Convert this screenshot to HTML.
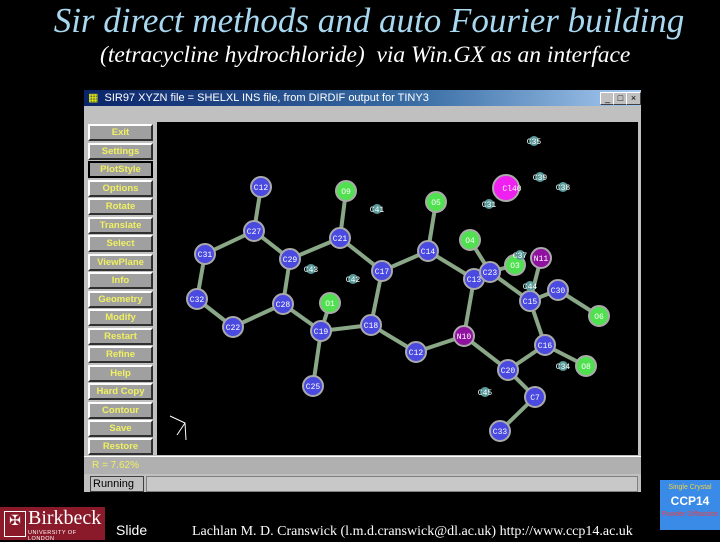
<!DOCTYPE html>
<html><head><meta charset="utf-8"><style>
body{margin:0;width:720px;height:540px;background:#000;position:relative;overflow:hidden;font-family:"Liberation Sans",sans-serif}
.t1{position:absolute;left:0;width:738px;text-align:center;top:1px;color:#a8d8f0;font-family:"Liberation Serif",serif;font-style:italic;font-size:35px;white-space:nowrap}
.t2{position:absolute;left:100px;top:42px;color:#fff;font-family:"Liberation Serif",serif;font-style:italic;font-size:23.5px;white-space:nowrap}
.win{position:absolute;left:84px;top:90px;width:557px;height:402px;background:#c0c0c0}
.tb{position:absolute;left:0;top:0;width:557px;height:16px;background:linear-gradient(90deg,#0a246a,#3a6ea5 60%,#a6caf0);color:#fff;font-size:11px;line-height:16px}
.btn{position:absolute;left:4px;width:65px;height:17px;background:#a0a0a0;border:2px solid #fff;border-right-color:#303030;border-bottom-color:#303030;color:#f0f060;font-size:9.5px;font-weight:bold;text-align:center;line-height:13px;box-sizing:border-box}
.plot{position:absolute;left:73px;top:32px;width:481px;height:333px;background:#000}
.wb{position:absolute;top:3px;width:13px;height:11px;background:#c0c0c0;border:1px solid #fff;border-right-color:#404040;border-bottom-color:#404040;font-size:9px;line-height:10px;text-align:center;color:#000}
</style></head><body>
<div class="t1">Sir direct methods and auto Fourier building</div>
<div class="t2">(tetracycline hydrochloride)&nbsp; via Win.GX as an interface</div>
<div class="win">
<div class="tb"><span style="color:#ff0;padding-left:4px">▦</span>&nbsp; SIR97 XYZN file = SHELXL INS file, from DIRDIF output for TINY3
<div class="wb" style="left:516px;top:2px">_</div><div class="wb" style="left:529px;top:2px">□</div><div class="wb" style="left:542px;top:2px">×</div></div>
<div class="btn" style="top:34px">Exit</div>
<div class="btn" style="top:53px">Settings</div>
<div class="btn" style="top:71px;border-color:#000">PlotStyle</div>
<div class="btn" style="top:90px">Options</div>
<div class="btn" style="top:108px">Rotate</div>
<div class="btn" style="top:127px">Translate</div>
<div class="btn" style="top:145px">Select</div>
<div class="btn" style="top:164px">ViewPlane</div>
<div class="btn" style="top:182px">Info</div>
<div class="btn" style="top:201px">Geometry</div>
<div class="btn" style="top:219px">Modify</div>
<div class="btn" style="top:238px">Restart</div>
<div class="btn" style="top:256px">Refine</div>
<div class="btn" style="top:275px">Help</div>
<div class="btn" style="top:293px">Hard Copy</div>
<div class="btn" style="top:312px">Contour</div>
<div class="btn" style="top:330px">Save</div>
<div class="btn" style="top:348px">Restore</div>
<div class="plot"></div>
<div style="position:absolute;left:0;top:366px;width:557px;height:18px;background:#b0b0b0;border-top:1px solid #fff;color:#f0f060;font-size:10px;line-height:18px;padding-left:8px;box-sizing:border-box">R = 7.62%</div>
<div style="position:absolute;left:6px;top:386px;width:50px;height:14px;border:1px solid #404040;font-size:11px;line-height:14px;color:#000;padding-left:2px">Running</div>
<div style="position:absolute;left:62px;top:386px;width:490px;height:14px;border:1px solid #808080;background:#c8c8c8"></div>
</div>
<svg style="position:absolute;left:0;top:0" width="720" height="540">
<g stroke="#8aa888" stroke-width="4">
<line x1="261" y1="187" x2="254" y2="231"/><line x1="254" y1="231" x2="205" y2="254"/><line x1="254" y1="231" x2="290" y2="259"/>
<line x1="205" y1="254" x2="197" y2="299"/><line x1="290" y1="259" x2="340" y2="238"/><line x1="340" y1="238" x2="346" y2="191"/>
<line x1="340" y1="238" x2="382" y2="271"/><line x1="290" y1="259" x2="283" y2="304"/><line x1="197" y1="299" x2="233" y2="327"/>
<line x1="233" y1="327" x2="283" y2="304"/><line x1="283" y1="304" x2="321" y2="331"/><line x1="321" y1="331" x2="330" y2="303"/>
<line x1="321" y1="331" x2="313" y2="386"/><line x1="321" y1="331" x2="371" y2="325"/><line x1="371" y1="325" x2="382" y2="271"/>
<line x1="382" y1="271" x2="428" y2="251"/><line x1="428" y1="251" x2="436" y2="202"/><line x1="428" y1="251" x2="474" y2="279"/>
<line x1="474" y1="279" x2="490" y2="272"/><line x1="490" y1="272" x2="470" y2="240"/><line x1="490" y1="272" x2="515" y2="265"/>
<line x1="490" y1="272" x2="530" y2="301"/><line x1="530" y1="301" x2="558" y2="290"/><line x1="530" y1="301" x2="545" y2="345"/>
<line x1="530" y1="301" x2="541" y2="258"/><line x1="558" y1="290" x2="599" y2="316"/><line x1="371" y1="325" x2="416" y2="352"/>
<line x1="416" y1="352" x2="464" y2="336"/><line x1="464" y1="336" x2="508" y2="370"/><line x1="508" y1="370" x2="545" y2="345"/>
<line x1="545" y1="345" x2="586" y2="366"/><line x1="508" y1="370" x2="535" y2="397"/><line x1="535" y1="397" x2="500" y2="431"/>
<line x1="474" y1="279" x2="464" y2="336"/>
</g>
<g font-family="Liberation Mono,monospace" font-size="8" fill="#fff" text-anchor="middle" stroke-width="2" stroke="#aaa">
<g fill="#4a4ae0">
<circle cx="261" cy="187" r="10"/><circle cx="254" cy="231" r="10"/><circle cx="205" cy="254" r="10"/><circle cx="290" cy="259" r="10"/>
<circle cx="340" cy="238" r="10"/><circle cx="382" cy="271" r="10"/><circle cx="428" cy="251" r="10"/><circle cx="474" cy="279" r="10"/>
<circle cx="490" cy="272" r="10"/><circle cx="197" cy="299" r="10"/><circle cx="283" cy="304" r="10"/><circle cx="233" cy="327" r="10"/>
<circle cx="321" cy="331" r="10"/><circle cx="371" cy="325" r="10"/><circle cx="416" cy="352" r="10"/><circle cx="530" cy="301" r="10"/>
<circle cx="558" cy="290" r="10"/><circle cx="545" cy="345" r="10"/><circle cx="508" cy="370" r="10"/><circle cx="535" cy="397" r="10"/>
<circle cx="500" cy="431" r="10"/><circle cx="313" cy="386" r="10"/></g>
<g fill="#50e050"><circle cx="346" cy="191" r="10"/><circle cx="436" cy="202" r="10"/><circle cx="470" cy="240" r="10"/>
<circle cx="515" cy="265" r="10"/><circle cx="330" cy="303" r="10"/><circle cx="599" cy="316" r="10"/><circle cx="586" cy="366" r="10"/></g>
<g fill="#9010a0"><circle cx="541" cy="258" r="10"/><circle cx="464" cy="336" r="10"/></g>
<circle cx="506" cy="188" r="13" fill="#f020f0"/>
<g fill="#5a9a9a" stroke="none"><circle cx="534" cy="141" r="5"/><circle cx="540" cy="177" r="5"/><circle cx="563" cy="187" r="5"/>
<circle cx="489" cy="204" r="5"/><circle cx="377" cy="209" r="5"/><circle cx="311" cy="269" r="5"/><circle cx="353" cy="279" r="5"/>
<circle cx="520" cy="255" r="5"/><circle cx="530" cy="286" r="5"/><circle cx="563" cy="366" r="5"/><circle cx="485" cy="392" r="5"/></g>
<g stroke="none">
<text x="261" y="190">C12</text><text x="254" y="234">C27</text><text x="205" y="257">C31</text><text x="290" y="262">C29</text>
<text x="340" y="241">C21</text><text x="382" y="274">C17</text><text x="428" y="254">C14</text><text x="474" y="282">C13</text>
<text x="490" y="275">C23</text><text x="197" y="302">C32</text><text x="283" y="307">C28</text><text x="233" y="330">C22</text>
<text x="321" y="334">C19</text><text x="371" y="328">C18</text><text x="416" y="355">C12</text><text x="530" y="304">C15</text>
<text x="558" y="293">C30</text><text x="545" y="348">C16</text><text x="508" y="373">C20</text><text x="535" y="400">C7</text>
<text x="500" y="434">C33</text><text x="313" y="389">C25</text>
<text x="346" y="194">O9</text><text x="436" y="205">O5</text><text x="470" y="243">O4</text><text x="515" y="268">O3</text>
<text x="330" y="306">O1</text><text x="599" y="319">O6</text><text x="586" y="369">O8</text>
<text x="541" y="261">N11</text><text x="464" y="339">N10</text><text x="512" y="191">Cl40</text>
<text x="534" y="144">C35</text><text x="540" y="180">C39</text><text x="563" y="190">C38</text><text x="489" y="207">C31</text>
<text x="377" y="212">C41</text><text x="311" y="272">C43</text><text x="353" y="282">C42</text><text x="520" y="258">C37</text>
<text x="530" y="289">C44</text><text x="563" y="369">C34</text><text x="485" y="395">C45</text></g>
</g>
<g stroke="#fff" fill="none" stroke-width="1"><polyline points="170,416 185,423 186,440"/><line x1="185" y1="423" x2="177" y2="435"/></g>
</svg>
<div style="position:absolute;left:0;top:507px;width:105px;height:33px;background:#8a1a2a;color:#fff">
<div style="position:absolute;left:4px;top:4px;width:20px;height:24px;border:1px solid #fff;font-size:14px;text-align:center">✠</div>
<div style="position:absolute;left:28px;top:0px;font-family:'Liberation Serif',serif;font-size:20px">Birkbeck</div>
<div style="position:absolute;left:28px;top:23px;font-size:5.5px;letter-spacing:.5px">UNIVERSITY OF LONDON</div></div>
<div style="position:absolute;left:116px;top:522px;color:#fff;font-size:14px">Slide</div>
<div style="position:absolute;left:192px;top:524px;color:#fff;font-family:'Liberation Serif',serif;font-size:14px;white-space:nowrap">Lachlan M. D. Cranswick (l.m.d.cranswick@dl.ac.uk) http://www.ccp14.ac.uk</div>
<div style="position:absolute;left:660px;top:480px;width:60px;height:50px;background:#3a8ae8;text-align:center;font-size:7px;color:#f0d040">
<div style="margin-top:4px">Single Crystal</div><div style="font-size:12px;font-weight:bold;color:#fff;margin-top:3px">CCP14</div><div style="margin-top:3px;color:#f04040">Powder Diffraction</div></div>
</body></html>
